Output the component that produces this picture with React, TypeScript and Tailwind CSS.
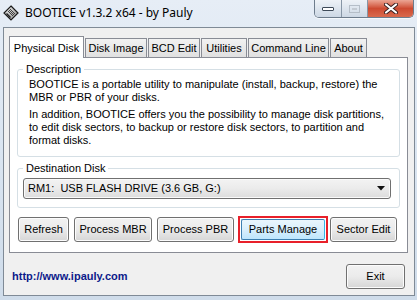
import type { ReactNode } from 'react';

const font = { fontFamily: '"Liberation Sans", Arial, sans-serif' };

function WinButton({ children, className = '' }: { children: ReactNode; className?: string }) {
    return (
        <button
            className={`h-[25px] flex items-center justify-center rounded-[3px] border border-[#707070] bg-gradient-to-b from-[#f2f2f2] via-[#ebebeb] to-[#d6d6d6] text-[11px] text-black shadow-[inset_0_0_0_1px_#fcfcfc] ${className}`}
        >
            {children}
        </button>
    );
}

function GroupBox({ label, children, className = '' }: { label: string; children: ReactNode; className?: string }) {
    return (
        <div className={`relative rounded-[3px] border border-[#d5dfe5] ${className}`}>
            <span className="absolute -top-[7px] left-[5px] bg-white px-[3px] text-[11px] leading-[13px] text-black">{label}</span>
            {children}
        </div>
    );
}

function AppIcon() {
    return (
        <svg width="16" height="16" viewBox="0 0 16 16">
            <defs>
                <linearGradient id="ic" x1="0" y1="0" x2="1" y2="1">
                    <stop offset="0" stopColor="#f4f4f4" />
                    <stop offset="1" stopColor="#8a8a8a" />
                </linearGradient>
            </defs>
            <path d="M8 1 L15 8 L8 15 L1 8 Z" fill="url(#ic)" stroke="#1a1a1a" strokeWidth="1.2" />
            <path d="M5 6 L10 11 M6 5 L11 10 M7 4 L12 9" stroke="#333" strokeWidth="0.9" />
            <path d="M3.5 8.5 L7.5 12.5" stroke="#222" strokeWidth="1.4" />
        </svg>
    );
}

function CaptionButtons() {
    return (
        <div className="flex h-[18px] mr-[3px] rounded-b-[5px] border border-t-0 border-[#6d7c8c] overflow-hidden shadow-[0_1px_0_#f5f8fb]">
            <div className="w-[27px] flex items-center justify-center bg-gradient-to-b from-[#eef2f7] via-[#dde5ee] to-[#cdd8e4] border-r border-[#8796a6]">
                <div className="w-[12px] h-[4px] bg-white border border-[#3e4a58] rounded-[1px]" />
            </div>
            <div className="w-[26px] flex items-center justify-center bg-gradient-to-b from-[#eef2f7] via-[#dde5ee] to-[#cdd8e4] border-r border-[#8796a6]">
                <div className="w-[11px] h-[8px] border border-[#b5bec8] flex items-center justify-center">
                    <div className="w-[5px] h-[2px] border border-[#c3cad2]" />
                </div>
            </div>
            <div className="w-[45px] flex items-center justify-center bg-gradient-to-b from-[#eba594] via-[#cd4a31] to-[#d9694d]">
                <svg width="14" height="11" viewBox="0 0 14 11">
                    <path d="M2 1.5 L12 9.5 M12 1.5 L2 9.5" stroke="#3a2020" strokeWidth="4" strokeLinecap="round" />
                    <path d="M2 1.5 L12 9.5 M12 1.5 L2 9.5" stroke="#ffffff" strokeWidth="2.2" strokeLinecap="round" />
                </svg>
            </div>
        </div>
    );
}

const tabs = ['Disk Image', 'BCD Edit', 'Utilities', 'Command Line', 'About'];
const tabWidths = ['w-[62px]', 'w-[52px]', 'w-[46px]', 'w-[81px]', 'w-[37px]'];

export default function App() {
    return (
        <div
            style={font}
            className="w-[417px] h-[300px] flex flex-col bg-gradient-to-b from-[#e6edf6] via-[#dae5f1] to-[#cfdcea] select-none"
        >
            {/* title bar */}
            <div className="h-[27px] flex items-start shrink-0">
                <div className="flex items-center h-[26px] pl-[3px]">
                    <AppIcon />
                    <span className="ml-[6px] text-[12px] text-black" style={{ fontFamily: '"Noto Sans", "Open Sans", sans-serif' }}>
                        BOOTICE v1.3.2 x64 - by Pauly
                    </span>
                </div>
                <div className="flex-1" />
                <CaptionButtons />
            </div>

            {/* client area */}
            <div className="flex-1 ml-[3px] mr-[2px] mb-[4px] border border-[#7f8a96] bg-[#f0f0f0] flex flex-col">
                <div className="pl-[5px] pr-[6px] pt-[8px]">
                    {/* tab strip */}
                    <div className="flex items-end h-[21px] relative z-10">
                        <div className="w-[75px] h-[22px] -mb-px bg-white border border-b-0 border-[#898c95] flex items-center justify-center text-[11px] text-black pt-[1px]">
                            Physical Disk
                        </div>
                        {tabs.map((t, i) => (
                            <div
                                key={t}
                                className={`${tabWidths[i]} h-[19px] ml-px border border-b-0 border-[#898c95] bg-gradient-to-b from-[#f2f2f2] to-[#e0e0e0] flex items-center justify-center text-[11px] text-black`}
                            >
                                {t}
                            </div>
                        ))}
                    </div>

                    {/* tab panel */}
                    <div className="h-[196px] border border-[#898c95] bg-white px-[7px] pt-[11px]">
                        <GroupBox label="Description" className="h-[88px]">
                            <div className="pl-[11px] pt-[8px] text-[11px] leading-[13px] text-black">
                                <p>
                                    BOOTICE is a portable utility to manipulate (install, backup, restore) the
                                    <br />
                                    MBR or PBR of your disks.
                                </p>
                                <p className="mt-[4px]">
                                    In addition, BOOTICE offers you the possibility to manage disk partitions,
                                    <br />
                                    to edit disk sectors, to backup or restore disk sectors, to partition and
                                    <br />
                                    format disks.
                                </p>
                            </div>
                        </GroupBox>

                        <GroupBox label="Destination Disk" className="h-[40px] mt-[11px]">
                            <div className="pl-[5px] pr-[8px] pt-[9px]">
                                <div className="h-[21px] flex items-center rounded-[3px] border border-[#707070] bg-gradient-to-b from-[#f3f3f3] via-[#ebebeb] to-[#dcdcdc] shadow-[inset_0_0_0_1px_#fafafa] pl-[4px] pr-[5px] text-[11px] text-black">
                                    <span className="flex-1 whitespace-pre">RM1:  USB FLASH DRIVE (3.6 GB, G:)</span>
                                    <svg width="8" height="5" viewBox="0 0 8 5">
                                        <path d="M0 0 L8 0 L4 4.5 Z" fill="#111" />
                                    </svg>
                                </div>
                            </div>
                        </GroupBox>

                        <div className="flex items-center mt-[8px] pl-[1px]">
                            <WinButton className="w-[51px]">Refresh</WinButton>
                            <WinButton className="w-[78px] ml-[5px]">Process MBR</WinButton>
                            <WinButton className="w-[77px] ml-[5px]">Process PBR</WinButton>
                            <div className="ml-[4px] w-[90px] h-[27px] border-[2px] border-[#e8202a] p-px flex">
                                <button className="flex-1 flex items-center justify-center rounded-[2px] border border-[#3c7fb1] border-r-[#35b6e6] bg-gradient-to-b from-[#eaf6fd] via-[#d9effc] to-[#bee6fd] text-[11px] text-black">
                                    Parts Manage
                                </button>
                            </div>
                            <WinButton className="w-[67px] ml-[2px]">Sector Edit</WinButton>
                        </div>
                    </div>
                </div>

                {/* footer */}
                <div className="flex items-center justify-between pl-[8px] pr-[9px] mt-[11px]">
                    <span className="text-[11px] font-bold text-[#0c1a8a]">http://www.ipauly.com</span>
                    <WinButton className="w-[59px] h-[24px]">Exit</WinButton>
                </div>
            </div>
        </div>
    );
}
